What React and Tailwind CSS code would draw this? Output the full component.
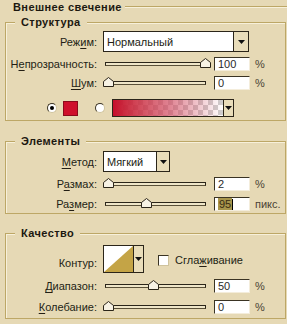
import React from "react";

// knob of a slider: small "house" shape pointing up
function Thumb({ x }) {
  return (
    <svg className="absolute top-[1px]" style={{ left: x }} width="11" height="10" viewBox="0 0 11 10">
      <path d="M0.5 9.5V4.5L5.5 0.5L10.5 4.5V9.5Z" fill="#f7f2e4" stroke="#2b2519" />
    </svg>
  );
}

function Slider({ x }) {
  return (
    <div className="relative w-[104px] h-[14px] flex items-center">
      <div className="ml-[2px] w-[101px] h-[4px] border border-[#2b2519] border-b-[#5a5038] bg-[#efe6c8]" />
      <Thumb x={x} />
    </div>
  );
}

function NumBox({ value, selected }) {
  return (
    <div className="w-[36px] h-[14px] bg-white border border-t-[#3a3323] border-l-[#3a3323] border-r-[#f4eddb] border-b-[#f4eddb] flex items-center pl-[3px] text-[11px] leading-[12px] text-[#2a2a2a]">
      {selected ? (
        <>
          <span className="bg-[#a8954c] text-[#3a2c12] px-[1px]">{value}</span>
          <span className="w-px h-[11px] bg-black" />
        </>
      ) : (
        value
      )}
    </div>
  );
}

function Row({ label, children, className = "" }) {
  return (
    <div className={`flex items-center ${className}`}>
      <div className="w-[91px] text-right">{label}</div>
      <div className="ml-[6px] flex items-center">{children}</div>
    </div>
  );
}

function SliderRow({ label, x, value, unit = "%", selected, className }) {
  return (
    <Row label={label} className={`h-[14px] ${className}`}>
      <Slider x={x} />
      <div className="ml-[7px]">
        <NumBox value={value} selected={selected} />
      </div>
      <span className="ml-[5px] text-[#4a4334]">{unit}</span>
    </Row>
  );
}

function Arrow() {
  return (
    <svg width="7" height="4" viewBox="0 0 7 4">
      <path d="M0 0H7L3.5 4Z" fill="#111" />
    </svg>
  );
}

function Dropdown({ text, width, arrowWidth }) {
  return (
    <div className={`flex h-[21px] border border-[#2b2519] bg-white ${width}`}>
      <div className="flex-1 flex items-center pl-[3px]">{text}</div>
      <div className={`flex items-center justify-center border-l border-[#2b2519] bg-[#e9ddba] ${arrowWidth}`}>
        <Arrow />
      </div>
    </div>
  );
}

function Radio({ checked }) {
  return (
    <div className="w-[10px] h-[10px] rounded-full bg-white border border-[#3a3323] border-b-[#cfc39d] border-r-[#cfc39d] flex items-center justify-center">
      {checked && <div className="w-[4px] h-[4px] rounded-full bg-black" />}
    </div>
  );
}

function Group({ title, children, className = "" }) {
  return (
    <fieldset
      className={`w-[281px] ml-[5px] border border-[#bda766] shadow-[inset_1px_1px_0_#f7f0da] ${className}`}
    >
      <legend className="ml-[9px] px-[6px] font-bold text-[11px] leading-[14px] tracking-[0.4px] text-[#1c1810] bg-[#e6d9b5]">
        {title}
      </legend>
      {children}
    </fieldset>
  );
}

const U = ({ children }) => <span className="underline underline-offset-2">{children}</span>;

export default function App() {
  return (
    <div
      className="w-[287px] h-[324px] overflow-hidden bg-[#e6d9b5] text-[11px] leading-[14px] text-[#231e14]"
      style={{ fontFamily: '"Liberation Sans", Arial, sans-serif' }}
    >
      <div className="flex items-center h-[14px] pl-[13px]">
        <span className="font-bold tracking-[0.4px] text-[#1c1810]">Внешнее свечение</span>
        <div className="flex-1 ml-[3px] h-[2px] border-t border-[#bda766] border-b border-b-[#f7f0da]" />
      </div>

      <Group title="Структура" className="mt-[1px] pb-[3px]">
        <Row label={<>Реж<U>и</U>м:</>} className="mt-[2px] h-[21px]">
          <Dropdown text="Нормальный" width="w-[146px]" arrowWidth="w-[15px]" />
        </Row>
        <SliderRow label={<>Н<U>е</U>прозрачность:</>} x={97} value="100" className="mt-[5px]" />
        <SliderRow label={<><U>Ш</U>ум:</>} x={0} value="0" className="mt-[5px]" />
        <div className="mt-[9px] h-[18px] flex items-center pl-[41px]">
          <Radio checked />
          <div className="ml-[6px] w-[15px] h-[15px] bg-[#cf0f2c] border border-[#8a0a1c]" />
          <div className="ml-[17px]">
            <Radio />
          </div>
          <div className="ml-[7px] flex h-[18px] border border-[#2b2519]">
            <div className="relative w-[110px] bg-[repeating-conic-gradient(#cfcfcf_0_25%,#ffffff_0_50%)] bg-[length:10px_10px]">
              <div className="absolute inset-0 bg-linear-to-r from-[#c60d2b] via-[#d14a60]/70 to-[#ffffff00]" />
            </div>
            <div className="w-[10px] flex items-center justify-center border-l border-[#2b2519] bg-[#e9ddba]">
              <Arrow />
            </div>
          </div>
        </div>
      </Group>

      <Group title="Элементы" className="mt-[13px] pb-[2px]">
        <Row label={<><U>М</U>етод:</>} className="mt-[3px] h-[21px]">
          <Dropdown text="Мягкий" width="w-[67px]" arrowWidth="w-[13px]" />
        </Row>
        <SliderRow label={<>Р<U>а</U>змах:</>} x={0} value="2" className="mt-[5px]" />
        <SliderRow label={<>Ра<U>з</U>мер:</>} x={38} value="95" unit="пикс." selected className="mt-[6px]" />
      </Group>

      <Group title="Качество" className="mt-[12px] pb-[4px]">
        <div className="mt-[5px] flex items-start h-[28px]">
          <div className="w-[91px] text-right pt-[11px]">Контур:</div>
          <div className="ml-[6px] flex h-[28px] border border-[#2b2519]">
            <svg width="29" height="26" viewBox="0 0 29 26">
              <rect width="29" height="26" fill="#ffffff" />
              <path d="M0 26L29 0V26Z" fill="#c4a446" />
            </svg>
            <div className="w-[10px] flex items-center justify-center border-l border-[#2b2519] bg-[#e9ddba]">
              <Arrow />
            </div>
          </div>
          <div className="ml-[14px] mt-[8px] flex items-center">
            <div className="w-[11px] h-[11px] bg-white border border-[#3a3323] border-b-[#cfc39d] border-r-[#cfc39d]" />
            <span className="ml-[6px]">
              Сгла<U>ж</U>ивание
            </span>
          </div>
        </div>
        <SliderRow label={<><U>Д</U>иапазон:</>} x={45} value="50" className="mt-[6px]" />
        <SliderRow label={<><U>К</U>олебание:</>} x={0} value="0" className="mt-[7px]" />
      </Group>
    </div>
  );
}
